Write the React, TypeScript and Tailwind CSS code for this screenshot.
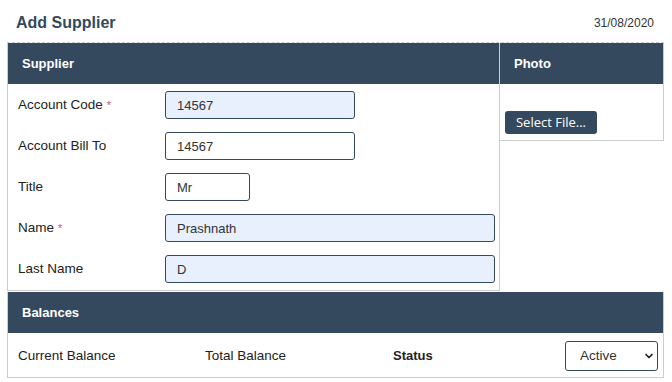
import { ChevronDown } from "lucide-react";

type Field = {
  label: string;
  value: string;
  width: string;
  required?: boolean;
  filled?: boolean;
};

const fields: Field[] = [
  { label: "Account Code", value: "14567", width: "w-[190px]", required: true, filled: true },
  { label: "Account Bill To", value: "14567", width: "w-[190px]" },
  { label: "Title", value: "Mr", width: "w-[85px]" },
  { label: "Name", value: "Prashnath", width: "w-[330px]", required: true, filled: true },
  { label: "Last Name", value: "D", width: "w-[330px]", filled: true },
];

function PanelHeader({ title }: { title: string }) {
  return (
    <div className="flex h-[41px] items-center bg-[#34495e] pl-[14px] text-[13px] font-bold text-white">
      {title}
    </div>
  );
}

export default function App() {
  return (
    <div className="h-[382px] w-[672px] bg-white font-['Liberation_Sans',Arial,sans-serif] text-[#222]">
      <div className="flex h-[42px] items-center justify-between pl-4 pr-[18px] pt-[4px]">
        <h1 className="text-base font-bold text-[#34495e]">Add Supplier</h1>
        <span className="text-xs text-[#333]">31/08/2020</span>
      </div>

      <div className="ml-[7px] w-[657px] border-t border-dashed border-[#ccc]">
        <div className="flex items-start">
          {/* supplier panel */}
          <div className="w-[493px] border-x border-b border-[#ccc]">
            <PanelHeader title="Supplier" />
            <div className="flex flex-col gap-[13px] py-[7px] pl-[10px]">
              {fields.map((f) => (
                <div key={f.label} className="flex h-[28px] items-center">
                  <label className="w-[147px] pt-px text-[13.5px]">
                    {f.label}
                    {f.required && <span className="ml-1 text-[11px] text-[#d9534f]">*</span>}
                  </label>
                  <input
                    readOnly
                    value={f.value}
                    className={`h-[28px] ${f.width} rounded-[3px] border border-[#34495e] px-[11px] text-[13px] text-[#333] outline-none ${
                      f.filled ? "bg-[#e8f0fe]" : "bg-white"
                    }`}
                  />
                </div>
              ))}
            </div>
          </div>

          {/* photo panel */}
          <div className="flex-1 border-r border-b border-[#ccc]">
            <PanelHeader title="Photo" />
            <div className="flex h-[56px] items-end pb-[6px] pl-[5px]">
              <button className="h-[23px] w-[92px] rounded-[3px] bg-[#34495e] font-['Open_Sans',sans-serif] text-[13px] text-white">
                Select File...
              </button>
            </div>
          </div>
        </div>

        {/* balances */}
        <div className="mt-px border-x border-b border-[#ccc]">
          <PanelHeader title="Balances" />
          <div className="flex h-[44px] items-center pl-[10px] pr-[5px] pt-[2px] text-[13.5px]">
            <span className="w-[187px]">Current Balance</span>
            <span className="w-[188px]">Total Balance</span>
            <span className="text-[13px] font-bold">Status</span>
            <div className="relative ml-auto">
              <select className="h-[30px] w-[93px] appearance-none rounded-[3px] border border-[#34495e] bg-white pl-[14px] text-[13.5px] text-[#333] outline-none">
                <option>Active</option>
                <option>Inactive</option>
              </select>
              <ChevronDown
                size={12}
                strokeWidth={3.5}
                className="pointer-events-none absolute right-[3px] top-[9px] text-[#222]"
              />
            </div>
          </div>
        </div>
      </div>
    </div>
  );
}
